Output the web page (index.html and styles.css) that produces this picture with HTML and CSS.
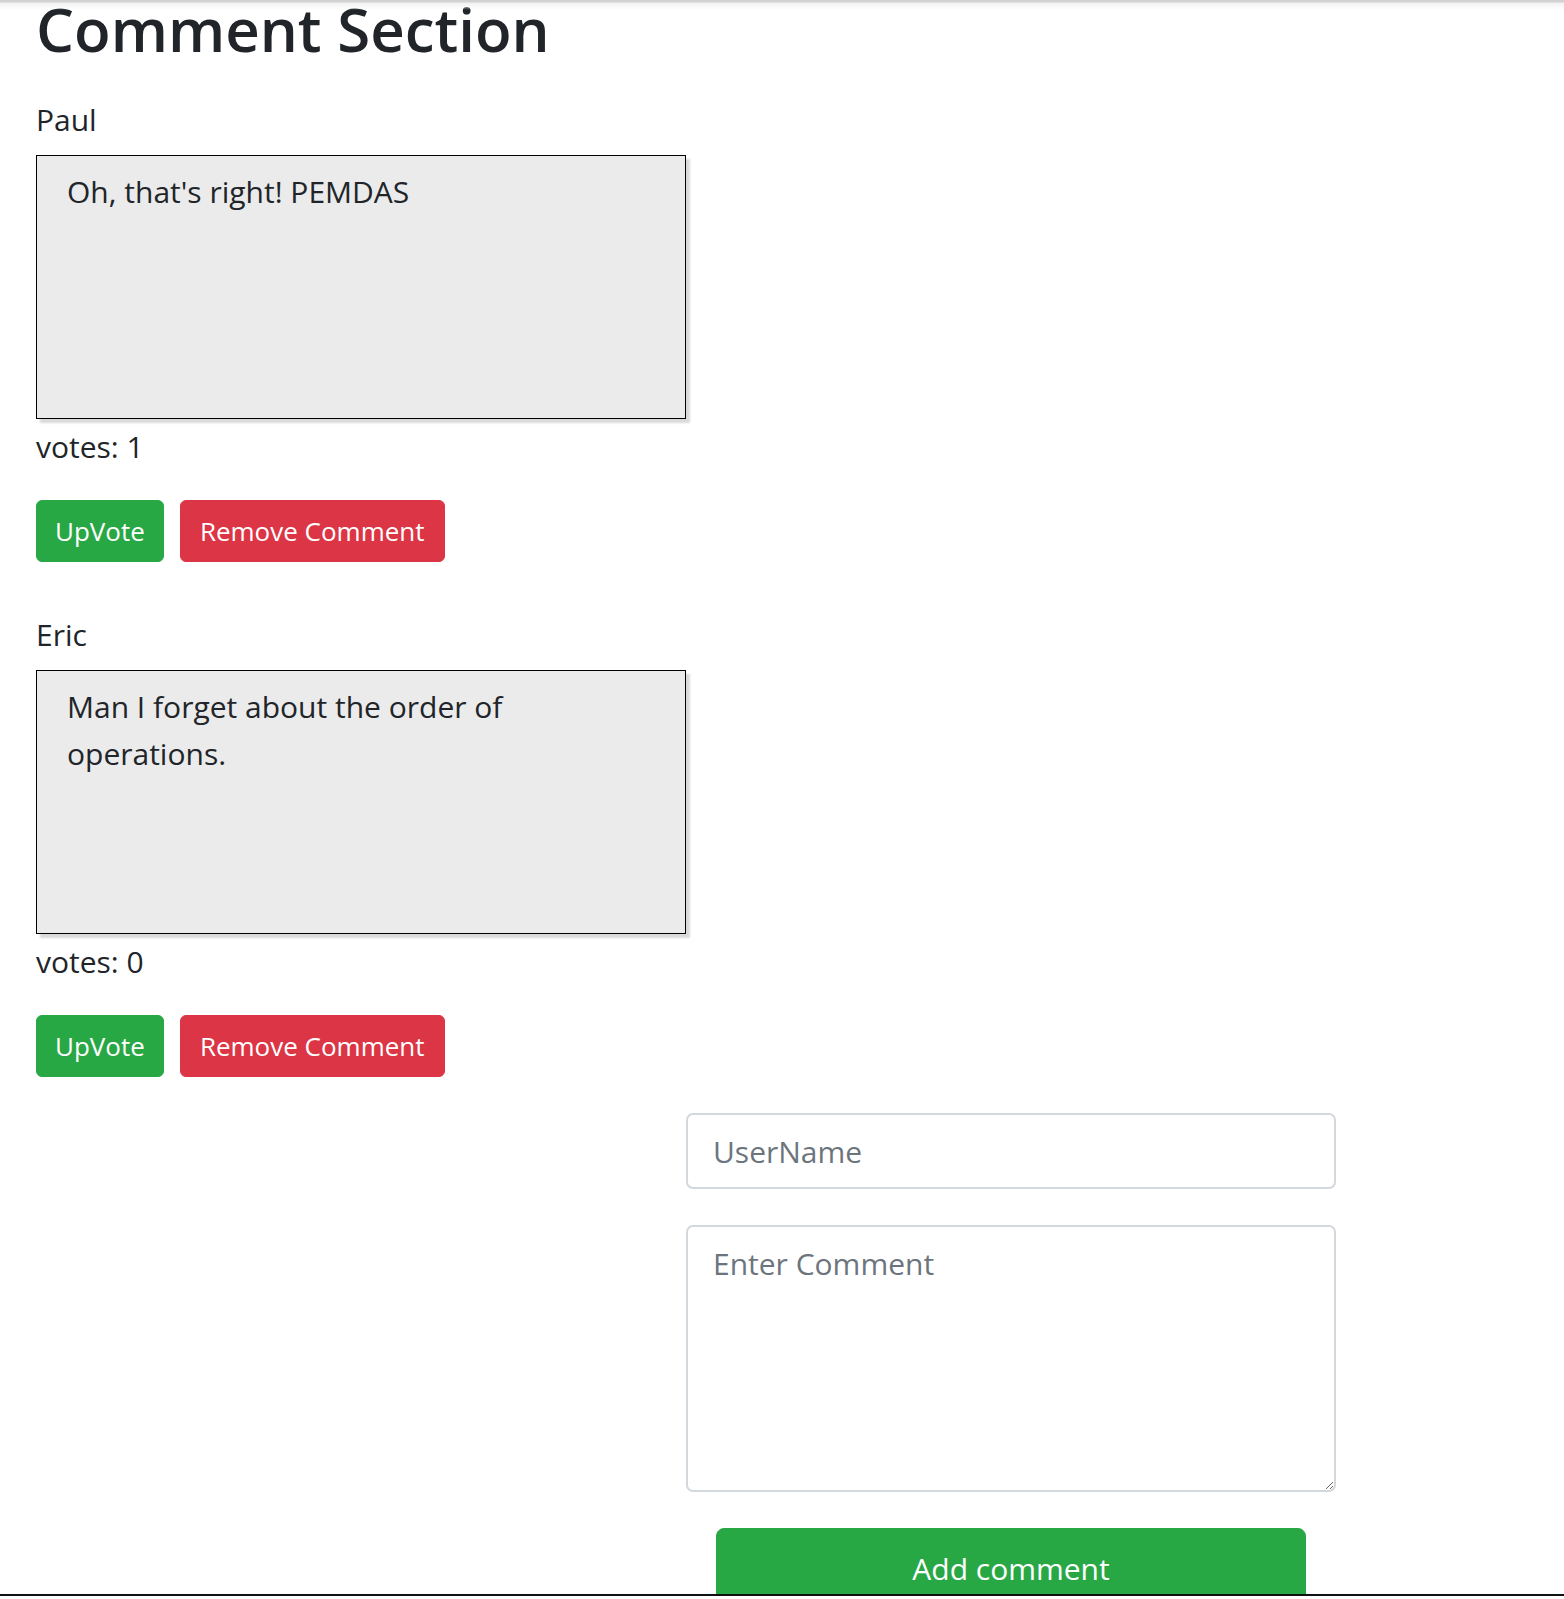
FILE: index.html
```html
<!DOCTYPE html>
<html lang="en">
<head>
<meta charset="utf-8">
<title>Comment Section</title>
<link rel="stylesheet" href="styles.css">
</head>
<body>
<div class="page">
  <h1 class="title">Comment Section</h1>
  <div class="layout">
    <div class="comments">
      <div class="comment">
        <div class="name">Paul</div>
        <div class="box">Oh, that's right! PEMDAS</div>
        <div class="votes">votes: 1</div>
        <div class="actions">
          <button class="btn btn-green">UpVote</button>
          <button class="btn btn-red">Remove Comment</button>
        </div>
      </div>
      <div class="comment">
        <div class="name">Eric</div>
        <div class="box">Man I forget about the order of operations.</div>
        <div class="votes">votes: 0</div>
        <div class="actions">
          <button class="btn btn-green">UpVote</button>
          <button class="btn btn-red">Remove Comment</button>
        </div>
      </div>
    </div>
    <form class="form">
      <input class="field" type="text" placeholder="UserName">
      <textarea class="field area" placeholder="Enter Comment"></textarea>
      <button type="button" class="add">Add comment</button>
    </form>
  </div>
</div>
</body>
</html>
```

FILE: styles.css
```css
html, body {
  margin: 0;
  padding: 0;
  background: #fff;
}
body {
  font-family: "Segoe UI", "Open Sans", "Noto Sans", sans-serif;
  color: #212529;
  font-size: 30px;
  line-height: 47px;
}
body::before {
  content: "";
  position: fixed;
  left: 0;
  right: 0;
  top: 0;
  height: 10px;
  background: linear-gradient(#d2d2d2 0, #d2d2d2 2px, #f2f2f2 3px, rgba(255,255,255,0) 10px);
  z-index: 5;
}
body::after {
  content: "";
  position: fixed;
  left: 0;
  right: 0;
  bottom: 0;
  height: 3px;
  border-top: 2px solid #111;
  background: #fff;
  z-index: 5;
}
.page {
  padding: 0 0 0 36px;
}
.title {
  font-size: 60px;
  font-weight: 600;
  line-height: 73px;
  margin: -7px 0 30px;
}
.layout {
  display: grid;
  grid-template-columns: 650px 650px;
}
.comments {
  grid-column: 1;
  grid-row: 1;
  display: flex;
  flex-direction: column;
  gap: 49px;
}
.name {
  margin-bottom: 12px;
}
.box {
  box-sizing: border-box;
  width: 650px;
  height: 264px;
  background: #ebebeb;
  border: 1px solid #000;
  box-shadow: 4px 4px 2px #dadada;
  padding: 12px 30px 0 30px;
}
.votes {
  margin-top: 4px;
}
.actions {
  display: flex;
  gap: 16px;
  margin-top: 30px;
}
.btn {
  font-family: inherit;
  font-size: 26px;
  line-height: 39px;
  padding: 10.5px 18px;
  border: 1px solid transparent;
  border-radius: 6px;
  color: #fff;
  cursor: pointer;
}
.btn-green {
  background: #28a745;
  border-color: #28a745;
}
.btn-red {
  background: #dc3545;
  border-color: #dc3545;
  padding-left: 19px;
  padding-right: 19px;
}
.form {
  grid-column: 2;
  grid-row: 2;
  margin: 36px 0 0;
  display: flex;
  flex-direction: column;
  gap: 36px;
  align-items: stretch;
}
.field {
  box-sizing: border-box;
  width: 650px;
  font-family: inherit;
  font-size: 30px;
  line-height: 47px;
  color: #495057;
  background: #fff;
  border: 2px solid #d3d8dd;
  border-radius: 7px;
  padding: 13px 25px 12px;
  margin: 0;
}
.field::placeholder {
  color: #6c757d;
  opacity: 1;
}
.area {
  height: 267px;
  resize: vertical;
  display: block;
}
.add {
  margin: 0 30px;
  font-family: inherit;
  font-size: 30px;
  line-height: 47px;
  padding: 16px 20px;
  border: 1px solid #28a745;
  background: #28a745;
  color: #fff;
  border-radius: 8px;
}
```
